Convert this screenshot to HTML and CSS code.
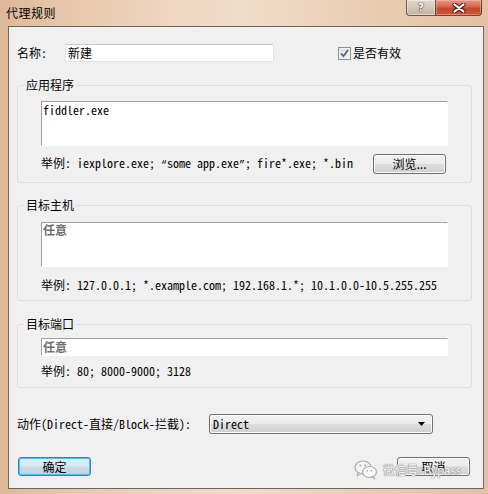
FILE: index.html
```html
<!DOCTYPE html>
<html>
<head>
<meta charset="utf-8">
<link rel="stylesheet" href="styles.css">
</head>
<body>
<div class="window">
  <div class="titlebar">
    <span class="title">代理规则</span>
    <div class="caption-buttons">
      <div class="cap help"><span class="help-glyph">?</span></div>
      <div class="cap close">
        <svg width="14" height="10" viewBox="0 0 14 10">
          <path d="M2.5 1.5 L11.5 8.5 M11.5 1.5 L2.5 8.5" stroke="#4a1e16" stroke-width="4.2" stroke-linecap="round"/>
          <path d="M2.5 1.5 L11.5 8.5 M11.5 1.5 L2.5 8.5" stroke="#ffffff" stroke-width="2.2" stroke-linecap="round"/>
        </svg>
      </div>
    </div>
  </div>
  <div class="client">
    <div class="name-row">
      <span class="name-label">名称:</span>
      <div class="textbox name-input">新建</div>
      <label class="check">
        <span class="checkbox">
          <svg width="9" height="9" viewBox="0 0 9 9"><path d="M1 4.5 L3.5 7.2 L8 1" fill="none" stroke="#4b5f92" stroke-width="1.8"/></svg>
        </span>
        <span class="check-text">是否有效</span>
      </label>
    </div>

    <fieldset class="group g-app">
      <legend>应用程序</legend>
      <div class="group-body">
        <div class="edit multi m1">fiddler.exe</div>
        <div class="example-row">
          <span class="hint">举例: iexplore.exe; <span class="q">“</span>some app.exe<span class="q">”</span>; fire*.exe; *.bin</span>
          <div class="btn browse">浏览...</div>
        </div>
      </div>
    </fieldset>

    <fieldset class="group g-host">
      <legend>目标主机</legend>
      <div class="group-body">
        <div class="edit multi m2"><span class="any">任意</span></div>
        <div class="hint hint-line h2">举例: 127.0.0.1; *.example.com; 192.168.1.*; 10.1.0.0-10.5.255.255</div>
      </div>
    </fieldset>

    <fieldset class="group g-port">
      <legend>目标端口</legend>
      <div class="group-body">
        <div class="edit single"><span class="any">任意</span></div>
        <div class="hint hint-line h3">举例: 80; 8000-9000; 3128</div>
      </div>
    </fieldset>

    <div class="action-row">
      <span class="action-label">动作(Direct-直接/Block-拦截):</span>
      <div class="select">
        <span class="select-value">Direct</span>
        <svg class="arrow" width="7" height="4" viewBox="0 0 7 4"><path d="M0 0 H7 L3.5 4 Z" fill="#000"/></svg>
      </div>
    </div>

    <div class="button-row">
      <div class="btn default">确定</div>
      <div class="btn cancel">取消</div>
    </div>
  </div>

  <div class="watermark">
    <svg class="wm-icon" width="24" height="20" viewBox="0 0 24 20">
      <ellipse cx="9" cy="7.5" rx="8" ry="6.5" fill="#f4f4f4" stroke="#a8a8a8" stroke-width="1.2"/>
      <path d="M4 12.5 L3 16 L7 13.5 Z" fill="#f4f4f4" stroke="#a8a8a8" stroke-width="1"/>
      <ellipse cx="15.5" cy="12" rx="7" ry="5.5" fill="#fafafa" stroke="#a8a8a8" stroke-width="1.2"/>
      <path d="M19.5 16.3 L21 19 L17.5 17.2 Z" fill="#fafafa" stroke="#a8a8a8" stroke-width="1"/>
      <circle cx="6.3" cy="5.5" r="1" fill="#a8a8a8"/>
      <circle cx="11.3" cy="5.5" r="1" fill="#a8a8a8"/>
      <circle cx="13.2" cy="10.8" r="0.9" fill="#a8a8a8"/>
      <circle cx="17.6" cy="10.8" r="0.9" fill="#a8a8a8"/>
    </svg>
    <span class="wm-text">微信号: Bypass</span>
  </div>
</div>
</body>
</html>
```
FILE: styles.css
```css
html, body {
  margin: 0;
  padding: 0;
}

body {
  width: 488px;
  height: 494px;
  overflow: hidden;
  font-family: "Noto Sans Mono CJK SC", "Noto Sans CJK SC", sans-serif;
  font-size: 12px;
  color: #000;
}

.window {
  position: relative;
  width: 488px;
  height: 494px;
  display: flex;
  flex-direction: column;
  background: linear-gradient(90deg, #ddb899 0%, #e6c6a9 12%, #eed6c1 35%, #f0dcc9 50%, #e9cdb4 75%, #e2c1a4 100%);
}

/* ---------- title bar ---------- */
.titlebar {
  height: 26px;
  display: flex;
  align-items: flex-start;
  flex-shrink: 0;
}

.title {
  margin: 5px 0 0 6px;
  font-family: "Noto Sans CJK SC", sans-serif;
  font-size: 12px;
  line-height: 16px;
  letter-spacing: 0.5px;
  color: #000;
}

.caption-buttons {
  margin-left: auto;
  margin-right: 6px;
  display: flex;
}

.cap {
  height: 16px;
  box-sizing: border-box;
  border: 1px solid rgba(70, 45, 30, 0.75);
  border-top: none;
  display: flex;
  align-items: center;
  justify-content: center;
}

.help {
  width: 29px;
  border-radius: 0 0 0 4px;
  border-right: none;
  background: linear-gradient(#e2d9d0 0%, #d3c6ba 50%, #c2b2a4 100%);
  box-shadow: inset 0 0 0 1px rgba(255, 255, 255, 0.45);
}

.help-glyph {
  font-family: "DejaVu Sans", sans-serif;
  font-weight: bold;
  font-size: 11px;
  line-height: 12px;
  color: #fff;
  text-shadow: 0 0 1px #3c3530, 0 0 1px #3c3530, 0 0 1px #3c3530;
}

.close {
  width: 47px;
  border-radius: 0 0 4px 0;
  background: linear-gradient(#e49a87 0%, #d5674f 45%, #c4462c 55%, #d2563a 100%);
  box-shadow: inset 0 0 0 1px rgba(255, 200, 180, 0.45);
}

/* ---------- client area ---------- */
.client {
  flex: 1;
  margin: 0 4px 5px 8px;
  border: 1px solid #6b6661;
  background: #f0f0f0;
  padding: 0 11px 0 8px;
  display: flex;
  flex-direction: column;
}

.name-row {
  margin-top: 17px;
  height: 18px;
  display: flex;
  align-items: center;
}

.name-label {
  width: 48px;
  line-height: 14px;
}

.textbox {
  box-sizing: border-box;
  height: 18px;
  background: #fff;
  border: 1px solid #e1e3e8;
  border-top-color: #c6c8ce;
  border-radius: 2px;
  line-height: 14px;
  padding: 1px 2px;
}

.name-input {
  width: 209px;
}

.check {
  margin-left: 64px;
  display: flex;
  align-items: center;
}

.checkbox {
  box-sizing: border-box;
  width: 13px;
  height: 13px;
  border: 1px solid #8f8f8f;
  background: linear-gradient(135deg, #dcdcdc 0%, #f6f6f6 100%);
  box-shadow: inset 0 0 0 1px #f4f4f4;
  display: flex;
  align-items: center;
  justify-content: center;
}

.check-text {
  margin-left: 2px;
  font-family: "Noto Sans CJK SC", sans-serif;
  line-height: 14px;
}

/* ---------- group boxes ---------- */
.group {
  margin: 16px 0 0 0;
  padding: 0;
  border: 1px solid #d5dfe5;
  border-radius: 3px;
  min-width: 0;
}

.group legend {
  margin-left: 6px;
  padding: 0 2px;
  line-height: 14px;
  font-family: "Noto Sans CJK SC", sans-serif;
}

.group-body {
  padding: 0 23px 8px 23px;
}

.g-host {
  margin-top: 15px;
}

.g-port {
  margin-top: 16px;
}

.g-port .group-body {
  padding-bottom: 9px;
}

.edit {
  box-sizing: border-box;
  width: 407px;
  background: #fff;
  border: 1px solid #fff;
  border-top-color: #a0a0a0;
  border-left-color: #a0a0a0;
  line-height: 14px;
  padding: 1px 1px;
}

.m1 {
  margin-top: 9px;
  height: 45px;
}

.m2 {
  margin-top: 10px;
  height: 45px;
  padding-top: 0;
}

.single {
  margin-top: 7px;
  height: 18px;
}

.any {
  font-family: "Noto Sans CJK SC", sans-serif;
  font-weight: bold;
  color: #707070;
}

.example-row {
  margin-top: 8px;
  height: 20px;
  display: flex;
  align-items: center;
  justify-content: space-between;
}

.hint {
  line-height: 14px;
  white-space: nowrap;
}

.q {
  font-family: "Liberation Mono", monospace;
  font-size: 10px;
}

.h2 {
  margin-top: 11px;
}

.h3 {
  margin-top: 8px;
}

/* ---------- buttons ---------- */
.btn {
  box-sizing: border-box;
  width: 73px;
  border: 1px solid #707070;
  border-radius: 3px;
  background: linear-gradient(#f2f2f2 0%, #ebebeb 48%, #dddddd 52%, #cfcfcf 100%);
  box-shadow: inset 0 0 0 1px #fbfbfb;
  font-family: "Noto Sans CJK SC", sans-serif;
  line-height: 14px;
  display: flex;
  align-items: center;
  justify-content: center;
}

.browse {
  height: 20px;
  margin-right: 2px;
}

.action-row {
  margin-top: 26px;
  height: 20px;
  display: flex;
  align-items: center;
}

.action-label {
  width: 192px;
  line-height: 14px;
  white-space: nowrap;
}

.select {
  box-sizing: border-box;
  width: 224px;
  height: 20px;
  border: 1px solid #707070;
  border-radius: 3px;
  background: linear-gradient(#f2f2f2 0%, #ebebeb 48%, #dddddd 52%, #cfcfcf 100%);
  box-shadow: inset 0 0 0 1px #fbfbfb;
  display: flex;
  align-items: center;
  padding: 0 7px 0 3px;
}

.select-value {
  line-height: 14px;
}

.arrow {
  margin-left: auto;
}

.button-row {
  margin-top: 23px;
  height: 19px;
  display: flex;
  justify-content: space-between;
  padding: 0 2px 0 1px;
}

.button-row .btn {
  height: 19px;
}

.default {
  border-color: #3c7fb1;
  background: linear-gradient(#e3eef6 0%, #d9e7f1 48%, #c9dbe9 52%, #bfd3e3 100%);
  box-shadow: inset 0 0 0 1px #48c0f0;
}

/* ---------- watermark overlay ---------- */
.watermark {
  position: absolute;
  left: 354px;
  top: 460px;
  display: flex;
  align-items: center;
  pointer-events: none;
}

.wm-text {
  margin-left: 5px;
  font-family: "Noto Sans CJK SC", sans-serif;
  font-size: 12px;
  line-height: 14px;
  letter-spacing: -0.3px;
  color: #fafafa;
  text-shadow: 0 0 1px #8c8c8c, 0 0 1px #8c8c8c, 0 0 1px #8c8c8c;
}
```
